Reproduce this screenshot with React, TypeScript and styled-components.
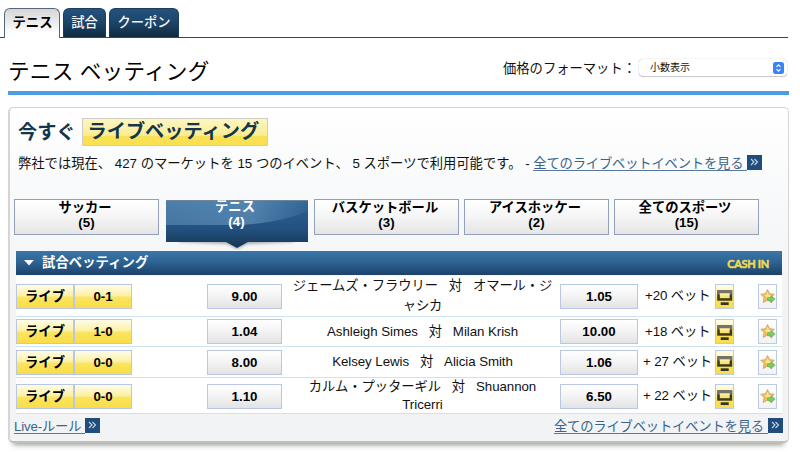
import React from "react";
import styled, { createGlobalStyle, css } from "styled-components";

const GlobalStyle = createGlobalStyle`
  * { box-sizing: border-box; }
  body {
    margin: 0;
    background: #fff;
    color: #111;
    font: 13.3px/20px "Liberation Sans", "Noto Sans CJK JP", sans-serif;
    white-space: nowrap;
    overflow: hidden;
  }
`;

const Page = styled.main`
  width: 800px;
  height: 452px;
`;

const Tabs = styled.nav`
  display: flex;
  gap: 3px;
  width: 788px;
  height: 38px;
  padding: 8px 0 0 4px;
  border-bottom: 1px solid #2d4a63;
`;

const Tab = styled.a<{ $width: number; $active?: boolean }>`
  width: ${(p) => p.$width}px;
  height: ${(p) => (p.$active ? 30 : 29)}px;
  border: 1px solid #1c3e5c;
  border-bottom: 0;
  border-radius: 6px 6px 0 0;
  background: linear-gradient(#24527f, #1c4467 50%, #0f2a40);
  color: #f1f5f8;
  font-weight: 500;
  line-height: 27px;
  text-align: center;
  ${(p) =>
    p.$active &&
    css`
      padding-left: 1px;
      border-color: #52687c;
      background: linear-gradient(#d6d6d6, #fff 85%);
      color: #000;
      font-weight: 700;
    `}
`;

const TitleBar = styled.header`
  display: flex;
  justify-content: space-between;
  width: 781px;
  height: 57px;
  margin-left: 8px;
  border-bottom: 4px solid #4a9de0;
`;

const Title = styled.h1`
  margin: 19px 0 0;
  font-size: 21.6px;
  font-weight: 400;
  line-height: 30px;
  letter-spacing: 0.25px;
  color: #000;
`;

const Format = styled.label`
  display: flex;
  padding: 21px 2px 0 0;
  line-height: 19px;
`;

const Select = styled.span`
  display: flex;
  align-items: center;
  justify-content: space-between;
  width: 148px;
  height: 17px;
  margin-left: 3px;
  padding: 0 3px 0 11px;
  border-radius: 4px;
  background: #fff;
  box-shadow: 0 0 1px rgba(0, 0, 0, 0.35), 0 1px 1px rgba(0, 0, 0, 0.2);
  font-size: 10px;
  line-height: 19px;
`;

const Panel = styled.section`
  width: 781px;
  height: 336px;
  margin: 12px 0 0 8px;
  padding: 0 6px 0 5px;
  border: 1px solid #d5d5d5;
  border-width: 1px 1px 2px 2px;
  border-bottom-color: #bebebb;
  border-radius: 5px;
  background: linear-gradient(#fff, #f8f9fa 28%, #f1f3f5 60%, #f1f3f5);
  box-shadow: 0 7px 5px -5px rgba(60, 60, 50, 0.5);
`;

const LiveTitle = styled.h2`
  display: flex;
  align-items: center;
  height: 28px;
  margin: 10px 0 0 3px;
  color: #14364c;
  font-size: 19.2px;
  line-height: 25px;
  font-weight: 700;
`;

const Highlight = styled.span`
  width: 186px;
  height: 28px;
  margin-left: 6px;
  padding-left: 5px;
  border: 1px solid #cfcdc4;
  background: linear-gradient(#fdf6c2, #fbec94 63%, #fae057 66%, #fae050);
`;

const Summary = styled.p`
  display: flex;
  height: 20px;
  margin: 8px 0 0 3px;
`;

const Link = styled.a`
  display: inline-flex;
  color: #3a648b;
  letter-spacing: -0.17px;
`;

const LinkText = styled.span`
  height: 17px;
  padding-right: 4px;
  border-bottom: 1px solid #55799b;
`;

const Chevron = styled.svg`
  width: 15px;
  height: 15px;
  margin-top: 1px;
  background: #1f4c7a;
`;

const Sports = styled.div`
  display: flex;
  gap: 5px;
  height: 52px;
  margin: 25px 0 0 -1px;
`;

const Sport = styled.div`
  width: 145px;
  height: 36px;
  border: 1px solid #93a1b8;
  background: linear-gradient(#fff, #f5f5f5 50%, #e5e5e5);
  color: #000;
  font-weight: 700;
  line-height: 15px;
  text-align: center;
`;

const ActiveSport = styled.div`
  position: relative;
  width: 145px;
  height: 51px;
  color: #fff;
  font-weight: 700;
  line-height: 15px;
  text-align: center;
`;

const ActiveArt = styled.svg`
  position: absolute;
  left: 0;
  top: 0;
`;

const SportName = styled.div`
  position: relative;
  height: 15px;
  padding-right: 3px;
  line-height: 16px;
`;

const SportCount = styled.div`
  position: relative;
  height: 15px;
  line-height: 16px;
`;

const Table = styled.div`
  width: 766px;
  margin-left: 1px;
`;

const TableHead = styled.div`
  display: flex;
  align-items: center;
  height: 24px;
  margin-bottom: 1px;
  padding: 0 13px 0 8px;
  background: linear-gradient(#3977a8, #2d6494 45%, #1d416b);
  color: #fff;
  font-weight: 700;
  line-height: 22px;
`;

const HeadLabel = styled.span`
  flex: 1;
  padding-left: 8px;
  letter-spacing: 0.1px;
`;

const CashIn = styled.span`
  padding-top: 2px;
  color: #f2da4e;
  font: 700 11px/16px Lato, sans-serif;
  letter-spacing: -0.3px;
  -webkit-text-stroke: 0.5px #f2da4e;
`;

const Row = styled.div<{ $height: number }>`
  display: grid;
  grid-template-columns: 58px 58px 75px 75px 278px 78px 77px 19px 43px;
  align-items: center;
  height: ${(p) => p.$height}px;
  border-bottom: 1px solid #cde3f1;
  background: #fff;
`;

const cell = css`
  height: 25px;
  border: 1px solid #b9c7e2;
  color: #000;
  font-weight: 700;
  line-height: 24px;
  text-align: center;
`;

const Live = styled.div`
  ${cell}
  background: linear-gradient(#fffce9, #fcf1a6 45%, #fae45f 55%, #f9dc47);
  line-height: 23px;
`;

const Price = styled.button`
  ${cell}
  padding: 0;
  background: linear-gradient(#fff, #f3f3f4 50%, #e3e3e3);
  font-family: inherit;
  font-size: inherit;
`;

const Match = styled.div<{ $leading: number }>`
  padding: 0 0 0 3px;
  text-align: center;
  line-height: ${(p) => p.$leading}px;
  letter-spacing: -0.06px;
  white-space: pre;
`;

const Bets = styled.span<{ $indent: number }>`
  padding-left: ${(p) => p.$indent}px;
  letter-spacing: -0.1px;
`;

const IconBox = styled.span<{ $gold?: boolean }>`
  display: flex;
  width: 19px;
  height: 25px;
  border: 1px solid #bccbe5;
  background: ${(p) =>
    p.$gold ? "linear-gradient(#fffce9, #fcf1a6 45%, #fae45f 55%, #f9dc47)" : "linear-gradient(#fff, #f2f2f4)"};
  justify-self: ${(p) => (p.$gold ? "start" : "end")};
`;

const Footer = styled.footer`
  display: flex;
  justify-content: space-between;
  width: 769px;
  margin-left: -1px;
  padding-top: 3px;
`;

const MoreLink = ({ children }: { children: string }) => (
  <Link>
    <LinkText>{children}</LinkText>
    <Chevron viewBox="0 0 15 15" fill="none" stroke="#c9d8e7" strokeWidth="1.1">
      <path d="M4 4l3 3-3 3M7.5 4l3 3-3 3" />
    </Chevron>
  </Link>
);

const Monitor = () => (
  <svg width="17" height="23" viewBox="0 0 17 23">
    <path d="M1.2 5.3h15v10.4h-15z" fill="#3e3920" />
    <path d="M1.2 5.3h15v4.2h-15z" fill="#77736a" />
    <path d="M3.8 8.5h9.8v4.7H3.8z" fill="#f9e46c" />
    <path d="M3.8 8.5h9.8v1.8H3.8z" fill="#fbf1ab" />
    <path d="M4.7 17.3h8v2.7h-8z" fill="#353426" />
  </svg>
);

const Star = () => (
  <svg width="17" height="23" viewBox="0 0 17 23">
    <path d="M8.5 4.5l2 4.2 4.8.6-3.5 3.3.9 4.9-4.2-2.4-4.3 2.4.9-4.9L1.8 9.3l4.8-.6z" fill="#f0c05a" stroke="#cfa468" strokeWidth=".9" />
    <path d="M8.5 6.8l1.4 3 3 .5-2.3 1.8-2.1 1-2.6-2.5 1.7-.8z" fill="#fbe59a" />
    <path d="M8.5 12.6H12v-2.2l4.2 3.7-4.2 3.7v-2.2H8.5z" fill="#7acb62" stroke="#4fae49" strokeWidth=".5" />
  </svg>
);

const matches = [
  { h: 41, score: "0-1", a: "9.00", b: "1.05", names: "ジェームズ・フラウリー   対   オマール・ジ\nャシカ", bets: "+20 ベット", indent: 7, leading: 20 },
  { h: 30, score: "1-0", a: "1.04", b: "10.00", names: "Ashleigh Simes   対   Milan Krish", bets: "+18 ベット", indent: 7, leading: 20 },
  { h: 31, score: "0-0", a: "8.00", b: "1.06", names: "Kelsey Lewis   対   Alicia Smith", bets: "+ 27 ベット", indent: 5, leading: 20 },
  { h: 36, score: "0-0", a: "1.10", b: "6.50", names: "カルム・プッターギル   対   Shuannon\nTricerri", bets: "+ 22 ベット", indent: 5, leading: 18 },
];

const SportTab = ({ name, count }: { name: string; count: number }) => (
  <Sport>
    <SportName>{name}</SportName>
    <SportCount>({count})</SportCount>
  </Sport>
);

export default function App() {
  return (
    <Page>
      <GlobalStyle />
      <Tabs>
        <Tab $width={56} $active>テニス</Tab>
        <Tab $width={43}>試合</Tab>
        <Tab $width={70}>クーポン</Tab>
      </Tabs>
      <TitleBar>
        <Title>テニス ベッティング</Title>
        <Format>
          価格のフォーマット：
          <Select>
            小数表示
            <svg width="11" height="12" viewBox="0 0 11 12">
              <rect width="11" height="12" rx="2.5" fill="#3b82f6" />
              <path d="M3.5 4.8l2-2 2 2M3.5 7.2l2 2 2-2" fill="none" stroke="#fff" strokeWidth="1.1" />
            </svg>
          </Select>
        </Format>
      </TitleBar>
      <Panel>
        <LiveTitle>
          今すぐ<Highlight>ライブベッティング</Highlight>
        </LiveTitle>
        <Summary>
          弊社では現在、 427 のマーケットを 15 つのイベント、 5 スポーツで利用可能です。 -&nbsp;
          <MoreLink>全てのライブベットイベントを見る</MoreLink>
        </Summary>
        <Sports>
          <SportTab name="サッカー" count={5} />
          <ActiveSport>
            <ActiveArt width="145" height="51" viewBox="0 0 145 51">
              <defs>
                <linearGradient id="sport" x1="0" y1="0" x2="0" y2="1">
                  <stop offset="0" stopColor="#2c6394" />
                  <stop offset=".6" stopColor="#235180" />
                  <stop offset="1" stopColor="#163652" />
                </linearGradient>
                <linearGradient id="gloss" x1="0" y1="0" x2="1" y2="0">
                  <stop offset="0" stopColor="#79a8cf" stopOpacity=".4" />
                  <stop offset=".6" stopColor="#79a8cf" stopOpacity=".5" />
                  <stop offset="1" stopColor="#79a8cf" stopOpacity=".08" />
                </linearGradient>
                <filter id="soft"><feGaussianBlur stdDeviation="1.5" /></filter>
              </defs>
              <path d="M15 39h115v4l-47 2-10 5-10-5-48-2z" fill="#777" opacity=".6" filter="url(#soft)" />
              <path d="M2 1h142v42H84l-11 6-11-6H2z" fill="url(#sport)" />
              <path d="M2 1h142v11Q110 26 68 26H2z" fill="url(#gloss)" />
              <path d="M2 1.5h142" stroke="#718491" />
            </ActiveArt>
            <SportName>テニス</SportName>
            <SportCount>(4)</SportCount>
          </ActiveSport>
          <SportTab name="バスケットボール" count={3} />
          <SportTab name="アイスホッケー" count={2} />
          <SportTab name="全てのスポーツ" count={15} />
        </Sports>
        <Table>
          <TableHead>
            <svg width="10" height="6" viewBox="0 0 10 6"><path d="M0 0h10L5 5.5z" fill="#f5f8fa" /></svg>
            <HeadLabel>試合ベッティング</HeadLabel>
            <CashIn>CASH IN</CashIn>
          </TableHead>
          {matches.map((m) => (
            <Row key={m.names} $height={m.h}>
              <Live>ライブ</Live>
              <Live>{m.score}</Live>
              <span />
              <Price>{m.a}</Price>
              <Match $leading={m.leading}>{m.names}</Match>
              <Price>{m.b}</Price>
              <Bets $indent={m.indent}>{m.bets}</Bets>
              <IconBox $gold><Monitor /></IconBox>
              <IconBox><Star /></IconBox>
            </Row>
          ))}
        </Table>
        <Footer>
          <MoreLink>Live-ルール</MoreLink>
          <MoreLink>全てのライブベットイベントを見る</MoreLink>
        </Footer>
      </Panel>
    </Page>
  );
}
